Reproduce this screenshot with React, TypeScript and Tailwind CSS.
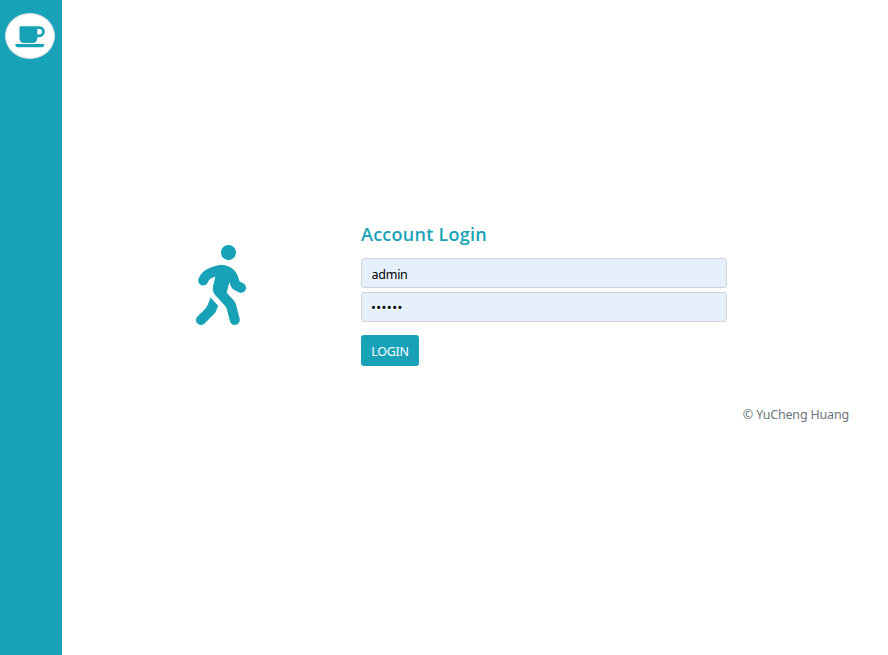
import { FaWalking } from "react-icons/fa";

function CoffeeIcon() {
  return (
    <svg className="mt-[1px] h-[23px] w-[30px] shrink-0" viewBox="0 0 30 23" fill="none">
      <path
        fill="#17a2b8"
        fillRule="evenodd"
        d="M5 1.200h19.300a5.500 5.500 0 0 1 0 11h-2v1.300c0 2.500-2 4.500-4.500 4.500H9c-2.500 0-4.500-2-4.500-4.500V1.700a.5.5 0 0 1 .5-.5ZM22.300 4v5.400h2a2.700 2.700 0 0 0 0-5.400h-2Z"
      />
      <path fill="#17a2b8" d="M.5 19.100h28.300c.8 0 .2 3.200-1.700 3.200H2.500C.6 22.300-.3 19.100.5 19.100Z" />
    </svg>
  );
}

export default function App() {
  return (
    <div className="flex h-[655px] w-full overflow-hidden bg-white font-['Noto_Sans','Open_Sans',sans-serif]">
      <aside className="flex w-[62px] shrink-0 flex-col bg-[#17a2b8] pt-[13px] pl-[5px]">
        <a className="flex h-[46px] w-[50px] items-center justify-center rounded-[50%] border border-[#dee2e6] bg-white">
          <CoffeeIcon />
        </a>
      </aside>
      <main className="flex flex-1 flex-col pt-[222px]">
        <div className="flex">
          <div className="mt-[23px] ml-[134px] w-[50px] text-[#17a2b8]">
            <FaWalking className="h-[80px] w-[50px]" />
          </div>
          <form className="ml-[115px] flex w-[366px] flex-col">
            <h1 className="h-[36px] font-['Open_Sans',sans-serif] text-[18px] leading-6 font-semibold tracking-[0.25px] text-[#17a2b8]">Account Login</h1>
            <input className="h-[30px] rounded-[3px] border border-[#ced4da] bg-[#e6f0fd] pt-[2px] pr-[10px] pl-[9.5px] text-[12.5px] tracking-[-0.25px] text-black" defaultValue="admin" />
            <input type="password" className="mt-1 h-[30px] rounded-[3px] border border-[#ced4da] bg-[#e6f0fd] pr-[10px] pl-[9px] text-[13px] tracking-[0.4px] text-black" defaultValue="123456" />
            <button type="button" className="mt-[13px] h-[31px] w-[58px] rounded-[3px] bg-[#17a2b8] pt-[2px] text-[12.5px] leading-5 tracking-[-0.3px] text-white">LOGIN</button>
          </form>
        </div>
        <p className="mt-[39px] pr-[39px] text-right text-[12.5px] leading-5 tracking-[-0.18px] text-[#6c757d]">© YuCheng Huang</p>
      </main>
    </div>
  );
}
